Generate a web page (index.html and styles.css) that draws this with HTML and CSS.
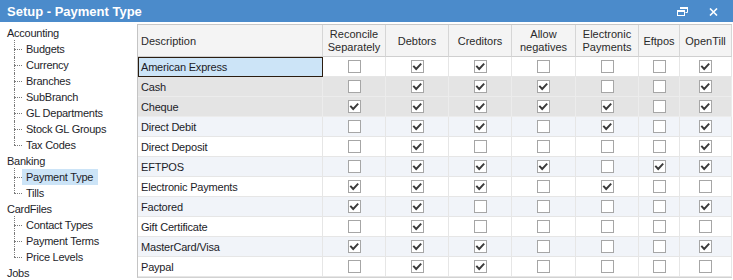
FILE: index.html
```html
<!DOCTYPE html>
<html>
<head>
<meta charset="utf-8">
<title>Setup - Payment Type</title>
<link rel="stylesheet" href="styles.css">
</head>
<body>
<div class="window">
  <div class="titlebar">
    <span class="title">Setup - Payment Type</span>
    <div class="controls">
      <svg class="ic-restore" width="11" height="9" viewBox="0 0 11 9">
        <path d="M3.5 0.5 H10.5 V5.5 H8.5" fill="none" stroke="#fff" stroke-width="1"/>
        <rect x="3" y="0" width="8" height="2" fill="#fff"/>
        <rect x="0.5" y="3.5" width="7" height="5" fill="none" stroke="#fff" stroke-width="1"/>
        <rect x="0" y="3" width="8" height="2" fill="#fff"/>
      </svg>
      <svg class="ic-close" width="9" height="8" viewBox="0 0 9 8">
        <path d="M1 0.5 L8 7.5 M8 0.5 L1 7.5" stroke="#fff" stroke-width="1.6"/>
      </svg>
    </div>
  </div>
  <div class="main">
    <nav class="tree">
      <div class="node root">Accounting</div>
      <div class="children">
        <div class="node child"><span>Budgets</span></div>
        <div class="node child"><span>Currency</span></div>
        <div class="node child"><span>Branches</span></div>
        <div class="node child"><span>SubBranch</span></div>
        <div class="node child"><span>GL Departments</span></div>
        <div class="node child"><span>Stock GL Groups</span></div>
        <div class="node child"><span>Tax Codes</span></div>
      </div>
      <div class="node root">Banking</div>
      <div class="children">
        <div class="node child sel"><span>Payment Type</span></div>
        <div class="node child"><span>Tills</span></div>
      </div>
      <div class="node root">CardFiles</div>
      <div class="children">
        <div class="node child"><span>Contact Types</span></div>
        <div class="node child"><span>Payment Terms</span></div>
        <div class="node child"><span>Price Levels</span></div>
      </div>
      <div class="node root">Jobs</div>
    </nav>
    <div class="grid">
      <div class="hd left">Description</div>
      <div class="hd">Reconcile<br>Separately</div>
      <div class="hd">Debtors</div>
      <div class="hd">Creditors</div>
      <div class="hd">Allow<br>negatives</div>
      <div class="hd">Electronic<br>Payments</div>
      <div class="hd">Eftpos</div>
      <div class="hd">OpenTill</div>

      <div class="c desc focus">American Express</div>
      <div class="c"><i class="cb"></i></div>
      <div class="c"><i class="cb on"><svg viewBox="0 0 11 11"><path d="M1.3 4.8 L4.2 8 L9.2 2.6"/></svg></i></div>
      <div class="c"><i class="cb on"><svg viewBox="0 0 11 11"><path d="M1.3 4.8 L4.2 8 L9.2 2.6"/></svg></i></div>
      <div class="c"><i class="cb"></i></div>
      <div class="c"><i class="cb"></i></div>
      <div class="c"><i class="cb"></i></div>
      <div class="c"><i class="cb on"><svg viewBox="0 0 11 11"><path d="M1.3 4.8 L4.2 8 L9.2 2.6"/></svg></i></div>

      <div class="c desc grey">Cash</div>
      <div class="c grey"><i class="cb"></i></div>
      <div class="c grey"><i class="cb on"><svg viewBox="0 0 11 11"><path d="M1.3 4.8 L4.2 8 L9.2 2.6"/></svg></i></div>
      <div class="c grey"><i class="cb on"><svg viewBox="0 0 11 11"><path d="M1.3 4.8 L4.2 8 L9.2 2.6"/></svg></i></div>
      <div class="c grey"><i class="cb on"><svg viewBox="0 0 11 11"><path d="M1.3 4.8 L4.2 8 L9.2 2.6"/></svg></i></div>
      <div class="c grey"><i class="cb"></i></div>
      <div class="c grey"><i class="cb"></i></div>
      <div class="c grey"><i class="cb on"><svg viewBox="0 0 11 11"><path d="M1.3 4.8 L4.2 8 L9.2 2.6"/></svg></i></div>

      <div class="c desc grey">Cheque</div>
      <div class="c grey"><i class="cb on"><svg viewBox="0 0 11 11"><path d="M1.3 4.8 L4.2 8 L9.2 2.6"/></svg></i></div>
      <div class="c grey"><i class="cb on"><svg viewBox="0 0 11 11"><path d="M1.3 4.8 L4.2 8 L9.2 2.6"/></svg></i></div>
      <div class="c grey"><i class="cb on"><svg viewBox="0 0 11 11"><path d="M1.3 4.8 L4.2 8 L9.2 2.6"/></svg></i></div>
      <div class="c grey"><i class="cb on"><svg viewBox="0 0 11 11"><path d="M1.3 4.8 L4.2 8 L9.2 2.6"/></svg></i></div>
      <div class="c grey"><i class="cb on"><svg viewBox="0 0 11 11"><path d="M1.3 4.8 L4.2 8 L9.2 2.6"/></svg></i></div>
      <div class="c grey"><i class="cb"></i></div>
      <div class="c grey"><i class="cb on"><svg viewBox="0 0 11 11"><path d="M1.3 4.8 L4.2 8 L9.2 2.6"/></svg></i></div>

      <div class="c desc alt">Direct Debit</div>
      <div class="c alt"><i class="cb"></i></div>
      <div class="c alt"><i class="cb on"><svg viewBox="0 0 11 11"><path d="M1.3 4.8 L4.2 8 L9.2 2.6"/></svg></i></div>
      <div class="c alt"><i class="cb on"><svg viewBox="0 0 11 11"><path d="M1.3 4.8 L4.2 8 L9.2 2.6"/></svg></i></div>
      <div class="c alt"><i class="cb"></i></div>
      <div class="c alt"><i class="cb on"><svg viewBox="0 0 11 11"><path d="M1.3 4.8 L4.2 8 L9.2 2.6"/></svg></i></div>
      <div class="c alt"><i class="cb"></i></div>
      <div class="c alt"><i class="cb on"><svg viewBox="0 0 11 11"><path d="M1.3 4.8 L4.2 8 L9.2 2.6"/></svg></i></div>

      <div class="c desc">Direct Deposit</div>
      <div class="c"><i class="cb"></i></div>
      <div class="c"><i class="cb on"><svg viewBox="0 0 11 11"><path d="M1.3 4.8 L4.2 8 L9.2 2.6"/></svg></i></div>
      <div class="c"><i class="cb"></i></div>
      <div class="c"><i class="cb"></i></div>
      <div class="c"><i class="cb"></i></div>
      <div class="c"><i class="cb"></i></div>
      <div class="c"><i class="cb on"><svg viewBox="0 0 11 11"><path d="M1.3 4.8 L4.2 8 L9.2 2.6"/></svg></i></div>

      <div class="c desc alt">EFTPOS</div>
      <div class="c alt"><i class="cb"></i></div>
      <div class="c alt"><i class="cb on"><svg viewBox="0 0 11 11"><path d="M1.3 4.8 L4.2 8 L9.2 2.6"/></svg></i></div>
      <div class="c alt"><i class="cb on"><svg viewBox="0 0 11 11"><path d="M1.3 4.8 L4.2 8 L9.2 2.6"/></svg></i></div>
      <div class="c alt"><i class="cb on"><svg viewBox="0 0 11 11"><path d="M1.3 4.8 L4.2 8 L9.2 2.6"/></svg></i></div>
      <div class="c alt"><i class="cb"></i></div>
      <div class="c alt"><i class="cb on"><svg viewBox="0 0 11 11"><path d="M1.3 4.8 L4.2 8 L9.2 2.6"/></svg></i></div>
      <div class="c alt"><i class="cb on"><svg viewBox="0 0 11 11"><path d="M1.3 4.8 L4.2 8 L9.2 2.6"/></svg></i></div>

      <div class="c desc">Electronic Payments</div>
      <div class="c"><i class="cb on"><svg viewBox="0 0 11 11"><path d="M1.3 4.8 L4.2 8 L9.2 2.6"/></svg></i></div>
      <div class="c"><i class="cb on"><svg viewBox="0 0 11 11"><path d="M1.3 4.8 L4.2 8 L9.2 2.6"/></svg></i></div>
      <div class="c"><i class="cb on"><svg viewBox="0 0 11 11"><path d="M1.3 4.8 L4.2 8 L9.2 2.6"/></svg></i></div>
      <div class="c"><i class="cb"></i></div>
      <div class="c"><i class="cb on"><svg viewBox="0 0 11 11"><path d="M1.3 4.8 L4.2 8 L9.2 2.6"/></svg></i></div>
      <div class="c"><i class="cb"></i></div>
      <div class="c"><i class="cb"></i></div>

      <div class="c desc alt">Factored</div>
      <div class="c alt"><i class="cb on"><svg viewBox="0 0 11 11"><path d="M1.3 4.8 L4.2 8 L9.2 2.6"/></svg></i></div>
      <div class="c alt"><i class="cb on"><svg viewBox="0 0 11 11"><path d="M1.3 4.8 L4.2 8 L9.2 2.6"/></svg></i></div>
      <div class="c alt"><i class="cb"></i></div>
      <div class="c alt"><i class="cb"></i></div>
      <div class="c alt"><i class="cb"></i></div>
      <div class="c alt"><i class="cb"></i></div>
      <div class="c alt"><i class="cb on"><svg viewBox="0 0 11 11"><path d="M1.3 4.8 L4.2 8 L9.2 2.6"/></svg></i></div>

      <div class="c desc">Gift Certificate</div>
      <div class="c"><i class="cb"></i></div>
      <div class="c"><i class="cb on"><svg viewBox="0 0 11 11"><path d="M1.3 4.8 L4.2 8 L9.2 2.6"/></svg></i></div>
      <div class="c"><i class="cb"></i></div>
      <div class="c"><i class="cb"></i></div>
      <div class="c"><i class="cb"></i></div>
      <div class="c"><i class="cb"></i></div>
      <div class="c"><i class="cb"></i></div>

      <div class="c desc alt">MasterCard/Visa</div>
      <div class="c alt"><i class="cb on"><svg viewBox="0 0 11 11"><path d="M1.3 4.8 L4.2 8 L9.2 2.6"/></svg></i></div>
      <div class="c alt"><i class="cb on"><svg viewBox="0 0 11 11"><path d="M1.3 4.8 L4.2 8 L9.2 2.6"/></svg></i></div>
      <div class="c alt"><i class="cb on"><svg viewBox="0 0 11 11"><path d="M1.3 4.8 L4.2 8 L9.2 2.6"/></svg></i></div>
      <div class="c alt"><i class="cb"></i></div>
      <div class="c alt"><i class="cb"></i></div>
      <div class="c alt"><i class="cb"></i></div>
      <div class="c alt"><i class="cb on"><svg viewBox="0 0 11 11"><path d="M1.3 4.8 L4.2 8 L9.2 2.6"/></svg></i></div>

      <div class="c desc">Paypal</div>
      <div class="c"><i class="cb"></i></div>
      <div class="c"><i class="cb on"><svg viewBox="0 0 11 11"><path d="M1.3 4.8 L4.2 8 L9.2 2.6"/></svg></i></div>
      <div class="c"><i class="cb on"><svg viewBox="0 0 11 11"><path d="M1.3 4.8 L4.2 8 L9.2 2.6"/></svg></i></div>
      <div class="c"><i class="cb"></i></div>
      <div class="c"><i class="cb"></i></div>
      <div class="c"><i class="cb"></i></div>
      <div class="c"><i class="cb"></i></div>
    </div>
  </div>
</div>
</body>
</html>
```

FILE: styles.css
```css
* { box-sizing: border-box; }
html, body { margin: 0; padding: 0; background: #fff; }
body {
  font-family: "Liberation Sans", Arial, sans-serif;
  font-size: 11px;
  color: #1e1e2a;
  width: 733px;
  height: 280px;
  overflow: hidden;
}
.window {
  width: 733px;
  height: 280px;
  display: flex;
  flex-direction: column;
  background: #fff;
}
.titlebar {
  height: 22px;
  flex: none;
  background: #4b8bcb;
  display: flex;
  align-items: center;
  padding-left: 7px;
  padding-right: 15px;
}
.title {
  color: #fff;
  font-weight: bold;
  font-size: 13px;
  flex: 1;
  padding-top: 1px;
}
.controls {
  display: flex;
  align-items: center;
  gap: 21px;
}
.ic-restore { display: block; margin-top: 1px; }
.ic-close { display: block; margin-top: 2px; }

.main {
  flex: 1;
  display: flex;
  min-height: 0;
}
.tree {
  width: 137px;
  flex: none;
  padding-top: 3px;
  letter-spacing: -0.25px;
}
.node {
  height: 16px;
  line-height: 16px;
  white-space: nowrap;
}
.root { padding-left: 7px; }
.children { margin-left: 14px; }
.child {
  position: relative;
  padding-left: 8px;
}
.child span {
  display: inline-block;
  padding: 0 4px;
  height: 16px;
}
.child.sel span { background: #cce4f7; padding-right: 5px; }
.child::before {
  content: "";
  position: absolute;
  left: 0;
  top: 8px;
  width: 8px;
  border-top: 1px dotted #7a7a7a;
}
.child::after {
  content: "";
  position: absolute;
  left: 0;
  top: 0;
  bottom: 0;
  border-left: 1px dotted #7a7a7a;
}
.child:first-child::after { top: -1px; }
.child:last-child::after { bottom: 8px; }

.grid {
  margin-top: 2px;
  width: 595px;
  flex: none;
  border-left: 1px solid #c4c4c4;
  border-top: 1px solid #c8c8c8;
  border-bottom: 1px solid #d2d2d2;
  align-self: flex-start;
  display: grid;
  grid-template-columns: 185px 63px 63px 63px 64px 63px 41px 52px;
  grid-auto-rows: 20px;
  grid-template-rows: 32px;
}
.hd {
  background: #f4f4f4;
  border-right: 1px solid #d6d6d6;
  border-bottom: 1px solid #cfcfcf;
  display: flex;
  align-items: center;
  justify-content: center;
  text-align: center;
  line-height: 13px;
  color: #2a2a2a;
  padding-top: 1px;
}
.hd.left { justify-content: flex-start; padding-left: 3px; }
.c {
  border-right: 1px solid #e6e6e6;
  border-bottom: 1px solid #e6e6e6;
  display: flex;
  align-items: center;
  justify-content: center;
  background: #fff;
}
.c.desc {
  justify-content: flex-start;
  padding-left: 3px;
  white-space: nowrap;
  color: #1c1c28;
  letter-spacing: -0.2px;
}
.c.alt { background: #f1f4f9; }
.c.grey { background: #e4e4e4; border-color: #ececec; }
.c.focus {
  background: #cce4f7;
  border: none;
  padding-left: 3px;
  box-shadow: inset 0 0 0 1px #2b1d10;
}
.cb {
  width: 13px;
  height: 13px;
  border: 1px solid #a6a6a6;
  background: #fff;
  display: block;
}
.cb svg {
  display: block;
  width: 11px;
  height: 11px;
}
.cb svg path {
  fill: none;
  stroke: #3a3a3a;
  stroke-width: 1.9;
}
```
